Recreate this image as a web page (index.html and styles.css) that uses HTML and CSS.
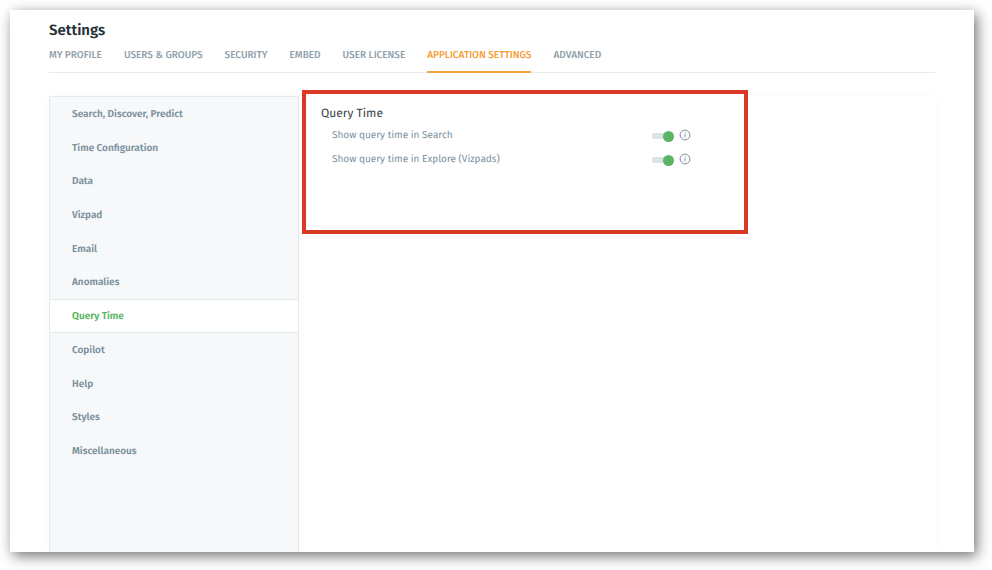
FILE: index.html
```
<!DOCTYPE html>
<html lang="en">
<head>
<meta charset="utf-8">
<meta name="viewport" content="width=device-width, initial-scale=1">
<title>Settings</title>
<link rel="stylesheet" href="styles.css">
</head>
<body>
<div class="window">
  <header class="header">
    <h1 class="title">Settings</h1>
    <nav class="tabs" aria-label="Settings sections">
      <a class="tab" href="#profile">MY PROFILE</a>
      <a class="tab" href="#users">USERS &amp; GROUPS</a>
      <a class="tab" href="#security">SECURITY</a>
      <a class="tab" href="#embed">EMBED</a>
      <a class="tab" href="#license">USER LICENSE</a>
      <a class="tab tab-active" href="#application" aria-current="page">APPLICATION SETTINGS</a>
      <a class="tab" href="#advanced">ADVANCED</a>
    </nav>
  </header>
  <div class="panel">
    <nav class="sidebar" aria-label="Application settings">
      <div class="menu">
        <a class="item" href="#search">Search, Discover, Predict</a>
        <a class="item" href="#time">Time Configuration</a>
        <a class="item" href="#data">Data</a>
        <a class="item" href="#vizpad">Vizpad</a>
        <a class="item" href="#email">Email</a>
        <a class="item" href="#anomalies">Anomalies</a>
        <a class="item item-active" href="#query" aria-current="page">Query Time</a>
        <a class="item" href="#copilot">Copilot</a>
        <a class="item" href="#help">Help</a>
        <a class="item" href="#styles">Styles</a>
        <a class="item" href="#misc">Miscellaneous</a>
      </div>
    </nav>
    <main class="content">
      <div class="highlight"></div>
      <h2 class="heading">Query Time</h2>
      <div class="row">
        <label class="label" for="q-search">Show query time in Search</label>
        <input class="switch" id="q-search" type="checkbox" role="switch" checked>
        <button class="info" type="button" aria-label="About query time in Search">
          <svg viewBox="0 0 12 12" width="12" height="12"><circle cx="6" cy="6" r="4.9"/><path d="M6 5.2v3.3M6 3.2v1.1"/></svg>
        </button>
      </div>
      <div class="row">
        <label class="label" for="q-explore">Show query time in Explore (Vizpads)</label>
        <input class="switch" id="q-explore" type="checkbox" role="switch" checked>
        <button class="info" type="button" aria-label="About query time in Explore">
          <svg viewBox="0 0 12 12" width="12" height="12"><circle cx="6" cy="6" r="4.9"/><path d="M6 5.2v3.3M6 3.2v1.1"/></svg>
        </button>
      </div>
    </main>
  </div>
</div>
</body>
</html>
```
FILE: styles.css
```
* { box-sizing: border-box; }
body {
  margin: 0;
  min-height: 100vh;
  padding: 10px 18px 18px 10px;
  display: flex;
  background: #fff;
  font-family: "Fira Sans", "Noto Sans", sans-serif;
  font-size: 10px;
  color: #7c919d;
  text-rendering: geometricPrecision;
}
a { color: inherit; text-decoration: none; }
.window {
  flex: 1;
  display: flex;
  flex-direction: column;
  padding: 10px 39px 0;
  background: #fff;
  box-shadow: 3px 4px 13px rgba(0, 0, 0, 0.55);
}
.header { border-bottom: 1px solid #e6edf1; }
.title {
  margin: 0;
  font-size: 15px;
  line-height: 20px;
  font-weight: 600;
  color: #263238;
}
.tabs { display: flex; gap: 22px; margin-bottom: -1px; }
.tab {
  padding: 8px 0;
  border-bottom: 2px solid transparent;
  line-height: 15px;
  font-weight: 500;
  color: #8fa1ab;
  white-space: nowrap;
}
.tab-active { color: #f79c38; border-color: #f7a143; }
.panel {
  flex: 1;
  display: flex;
  margin-top: 23px;
  box-shadow: 0 0 16px rgba(0, 0, 0, 0.03);
  clip-path: inset(-20px -20px 0 -20px);
}
.sidebar {
  flex: 0 0 250px;
  background: #f6f8fa;
  border: 1px solid #e4eaed;
  border-bottom: 0;
}
.menu { display: grid; grid-auto-rows: 1fr; height: 371px; }
.item {
  display: flex;
  align-items: center;
  padding-left: 22px;
  border: solid transparent;
  border-width: 1px 0;
  font-weight: 600;
}
.item-active { background: #fff; border-color: #dde7ec; color: #58b560; }
.content { flex: 1; position: relative; padding: 9px 22px; background: #fff; }
.highlight {
  position: absolute;
  top: -6px;
  left: 3px;
  width: 446px;
  height: 144px;
  border: 4px solid #d93a26;
  pointer-events: none;
}
.heading {
  margin: 0;
  font-size: 12px;
  line-height: 18px;
  font-weight: 400;
  color: #37444b;
}
.row { display: flex; align-items: center; height: 24px; padding-left: 11px; }
.label { flex: 0 0 320px; line-height: 16px; }
.switch {
  appearance: none;
  display: flex;
  align-items: center;
  justify-content: flex-end;
  width: 22px;
  height: 12px;
  margin: 2px 5px 0 0;
  background:
    radial-gradient(circle at 3px 50%, #dde4e8 3px, transparent 3px),
    linear-gradient(#dde4e8, #dde4e8) 3px 50% / 12px 6px no-repeat;
}
.switch::after {
  content: "";
  width: 11px;
  height: 11px;
  border-radius: 50%;
  background: #5ab462;
}
.info { display: flex; padding: 0; border: 0; background: none; }
.info svg { fill: none; stroke: #7c919d; stroke-width: 1; }
```
